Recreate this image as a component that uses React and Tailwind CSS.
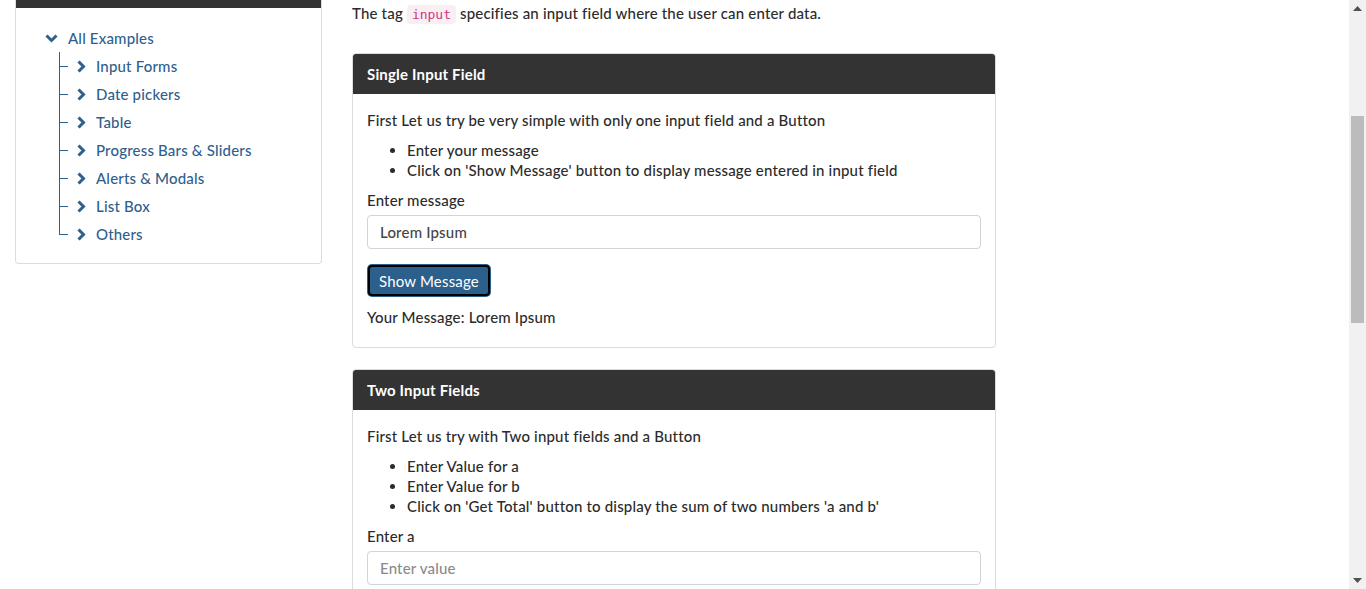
import { useState } from 'react'

const links = ['Input Forms', 'Date pickers', 'Table', 'Progress Bars & Sliders', 'Alerts & Modals', 'List Box', 'Others']

function ChevronDown() {
  return (
    <svg width="13" height="10" viewBox="0 0 13 10" className="shrink-0">
      <path d="M1.5 2.5 L6.5 7.5 L11.5 2.5" fill="none" stroke="#2f5f8f" strokeWidth="3" strokeLinejoin="miter" />
    </svg>
  )
}

function ChevronRight() {
  return (
    <svg width="10" height="13" viewBox="0 0 10 13" className="shrink-0">
      <path d="M2.5 1.5 L7.5 6.5 L2.5 11.5" fill="none" stroke="#2f5f8f" strokeWidth="3" strokeLinejoin="miter" />
    </svg>
  )
}

function Branch({ last }) {
  return (
    <svg width="9" height="28" viewBox="0 0 9 28" className="shrink-0">
      <line x1="0.5" y1="0" x2="0.5" y2={last ? 14.5 : 28} stroke="#2f5f8f" strokeWidth="1" />
      <line x1="0" y1="14.5" x2="9" y2="14.5" stroke="#2f5f8f" strokeWidth="1" />
    </svg>
  )
}

function Sidebar() {
  return (
    <div className="w-[307px] shrink-0 border border-t-0 border-[#dcdcdc] rounded-b-[4px] bg-white">
      <div className="h-[8px] bg-[#333333]" />
      <div className="pt-[16px] pb-[15px] pl-[29px]">
        <div className="flex items-center h-[28px] text-[#2f5f8f]">
          <ChevronDown />
          <span className="ml-[10px]">All Examples</span>
        </div>
        <ul className="ml-[14px]">
          {links.map((l, i) => (
            <li key={l} className="flex items-center h-[28px] text-[#2f5f8f]">
              <Branch last={i === links.length - 1} />
              <span className="ml-[8px] flex items-center"><ChevronRight /></span>
              <span className="ml-[10px]">{l}</span>
            </li>
          ))}
        </ul>
      </div>
    </div>
  )
}

function Card({ title, children }) {
  return (
    <div className="border border-[#dcdcdc] rounded-[4px] bg-white overflow-hidden">
      <div className="h-[40px] bg-[#333333] flex items-center px-[14px] text-white font-bold">{title}</div>
      <div className="px-[14px] pt-[16px] pb-[20px]">{children}</div>
    </div>
  )
}

export default function App() {
  const [message, setMessage] = useState('Lorem Ipsum')
  const [shown, setShown] = useState('Lorem Ipsum')

  return (
    <div
      className="h-[589px] overflow-hidden flex bg-white text-[15px] leading-5 font-medium tracking-[0.18px] text-[#2b2b2b]"
      style={{ fontFamily: 'Lato, "Noto Sans", sans-serif' }}
    >
      <div className="flex-1 flex items-start pl-[15px] gap-[30px]">
        <Sidebar />
        <div className="w-[644px] shrink-0 pt-[3px]">
          <p className="h-[20px]">
            The tag{' '}
            <code
              className="px-[5px] py-[2px] rounded-[4px] bg-[#f8eff3] text-[#d63384] text-[13px] leading-none font-normal tracking-normal"
              style={{ fontFamily: '"DejaVu Sans Mono", monospace' }}
            >
              input
            </code>{' '}
            specifies an input field where the user can enter data.
          </p>

          <div className="mt-[30px] flex flex-col gap-[21px]">
            <Card title="Single Input Field">
              <p>First Let us try be very simple with only one input field and a Button</p>
              <ul className="list-disc pl-[40px] my-[10px]">
                <li>Enter your message</li>
                <li>Click on 'Show Message' button to display message entered in input field</li>
              </ul>
              <label className="block">Enter message</label>
              <input
                value={message}
                onChange={(e) => setMessage(e.target.value)}
                className="mt-[5px] w-full h-[34px] border border-[#ced4da] rounded-[4px] px-[12px] text-[#444] outline-none"
              />
              <button
                onClick={() => setShown(message)}
                className="mt-[16px] h-[31px] ml-[1px] px-[9px] bg-[#2b5f8c] text-white font-normal border-2 border-black rounded-[4px] ring-1 ring-[#2b5f8c]"
              >
                Show Message
              </button>
              <p className="mt-[11px]">Your Message: {shown}</p>
            </Card>

            <Card title="Two Input Fields">
              <p>First Let us try with Two input fields and a Button</p>
              <ul className="list-disc pl-[40px] my-[10px]">
                <li>Enter Value for a</li>
                <li>Enter Value for b</li>
                <li>Click on 'Get Total' button to display the sum of two numbers 'a and b'</li>
              </ul>
              <label className="block">Enter a</label>
              <input
                placeholder="Enter value"
                className="mt-[5px] w-full h-[34px] border border-[#ced4da] rounded-[4px] px-[12px] placeholder:text-[#8a8a8a] outline-none"
              />
            </Card>
          </div>
        </div>
      </div>

      <div className="w-[17px] shrink-0 bg-[#f1f1f1] flex flex-col items-center">
        <div className="h-[17px] flex items-center justify-center">
          <svg width="9" height="5" viewBox="0 0 9 5"><path d="M0 5 L4.5 0 L9 5 Z" fill="#505050" /></svg>
        </div>
        <div className="h-[99px]" />
        <div className="w-[13px] h-[207px] bg-[#bcbcbc]" />
        <div className="flex-1" />
        <div className="h-[17px] flex items-center justify-center">
          <svg width="9" height="5" viewBox="0 0 9 5"><path d="M0 0 L9 0 L4.5 5 Z" fill="#505050" /></svg>
        </div>
      </div>
    </div>
  )
}
